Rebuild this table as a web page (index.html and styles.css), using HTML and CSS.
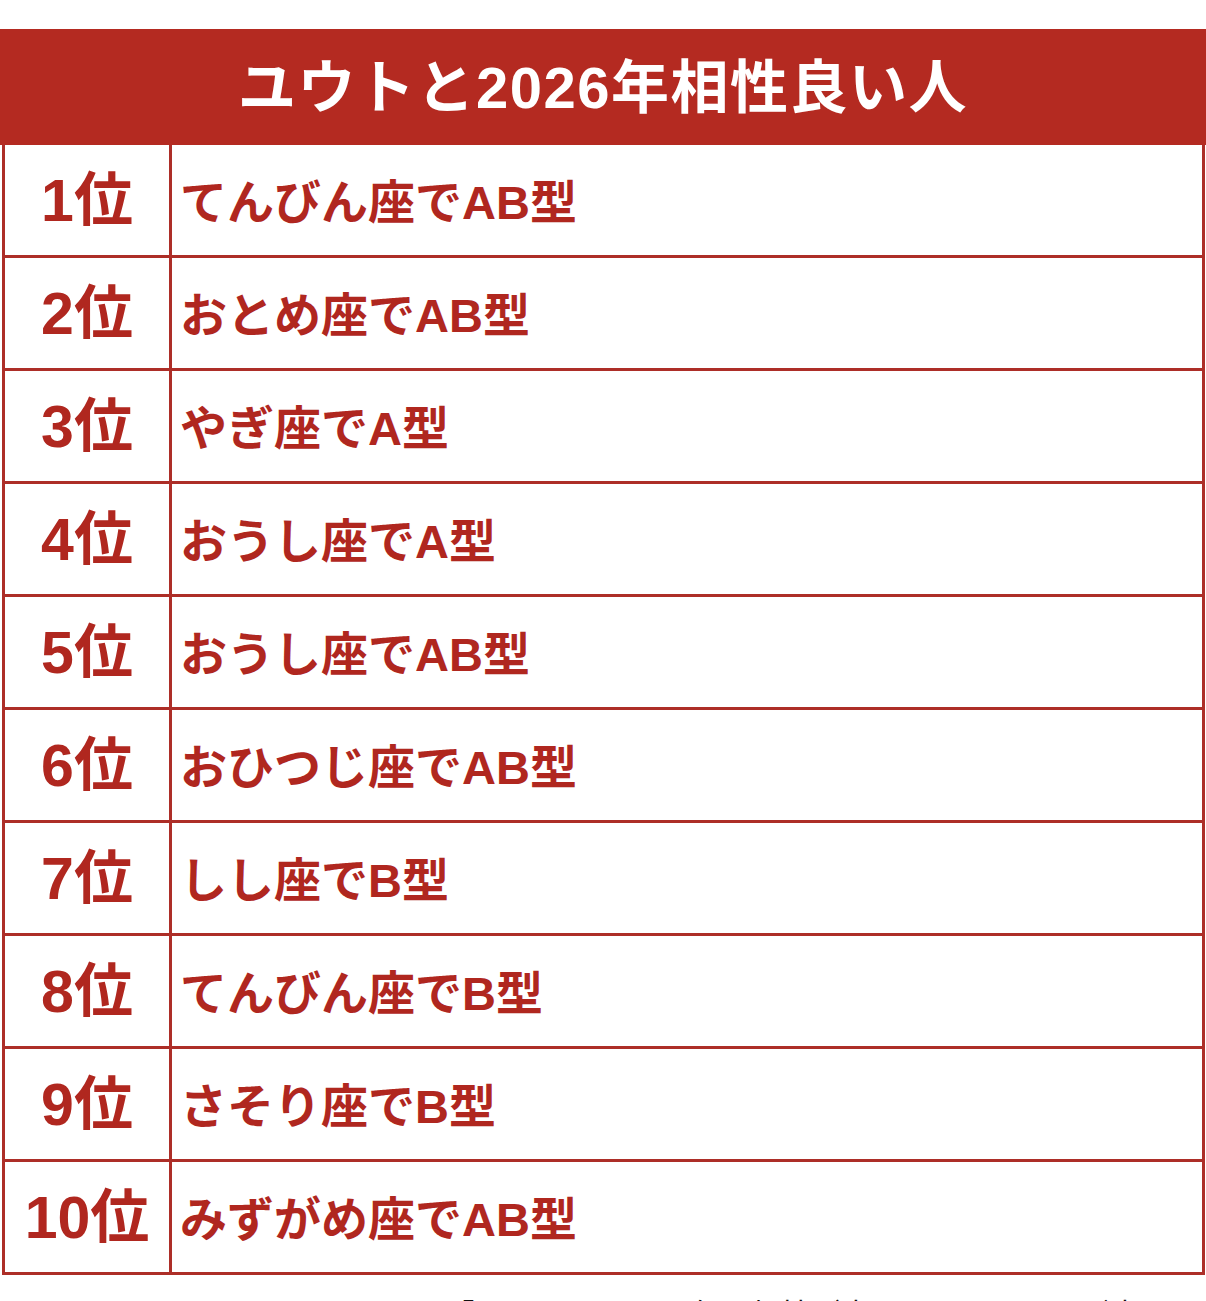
FILE: index.html
```html
<!DOCTYPE html>
<html lang="ja">
<head>
<meta charset="utf-8">
<title>ユウトと2026年相性良い人</title>
<link rel="stylesheet" href="styles.css">
</head>
<body>
<div class="page">
  <div class="title">ユウトと2026年相性良い人</div>
  <div class="table">
    <div class="row"><div class="rank">1位</div><div class="item">てんびん座でAB型</div></div>
    <div class="row"><div class="rank">2位</div><div class="item">おとめ座でAB型</div></div>
    <div class="row"><div class="rank">3位</div><div class="item">やぎ座でA型</div></div>
    <div class="row"><div class="rank">4位</div><div class="item">おうし座でA型</div></div>
    <div class="row"><div class="rank">5位</div><div class="item">おうし座でAB型</div></div>
    <div class="row"><div class="rank">6位</div><div class="item">おひつじ座でAB型</div></div>
    <div class="row"><div class="rank">7位</div><div class="item">しし座でB型</div></div>
    <div class="row"><div class="rank">8位</div><div class="item">てんびん座でB型</div></div>
    <div class="row"><div class="rank">9位</div><div class="item">さそり座でB型</div></div>
    <div class="row"><div class="rank">10位</div><div class="item">みずがめ座でAB型</div></div>
  </div>
  <div class="caption">「ユウト」と2026年に相性が良い人のランキング表</div>
</div>
</body>
</html>
```
FILE: styles.css
```css
html, body {
  margin: 0;
  padding: 0;
  background: #ffffff;
}
body {
  font-family: "Liberation Sans", "Noto Sans CJK JP", sans-serif;
  width: 1206px;
  height: 1301px;
  overflow: hidden;
}
.page {
  padding-top: 29px;
}
.title {
  background: #b42a21;
  color: #ffffff;
  height: 116px;
  box-sizing: border-box;
  padding-top: 1px;
  display: flex;
  align-items: center;
  justify-content: center;
  font-size: 58px;
  line-height: 1;
  font-weight: 700;
  letter-spacing: 1.5px;
}
.table {
  margin: 0 1px 0 2px;
  border-left: 3px solid #ad2e28;
  border-right: 3px solid #ad2e28;
}
.row {
  display: flex;
  height: 110px;
  border-bottom: 3px solid #ad2e28;
}
.rank {
  width: 167px;
  flex-shrink: 0;
  border-right: 3px solid #ad2e28;
  box-sizing: border-box;
  padding-top: 2px;
  display: flex;
  align-items: center;
  justify-content: center;
  color: #b0271f;
  font-size: 59px;
  line-height: 1;
  font-weight: 700;
  letter-spacing: 0;
}
.item {
  flex: 1;
  display: flex;
  align-items: center;
  box-sizing: border-box;
  padding-left: 8px;
  padding-top: 4px;
  color: #b0271f;
  font-size: 47px;
  line-height: 1;
  font-weight: 700;
}
.caption {
  margin-top: 17px;
  text-align: right;
  padding-right: 66px;
  font-size: 30px;
  line-height: 45px;
  color: #111111;
}
```
